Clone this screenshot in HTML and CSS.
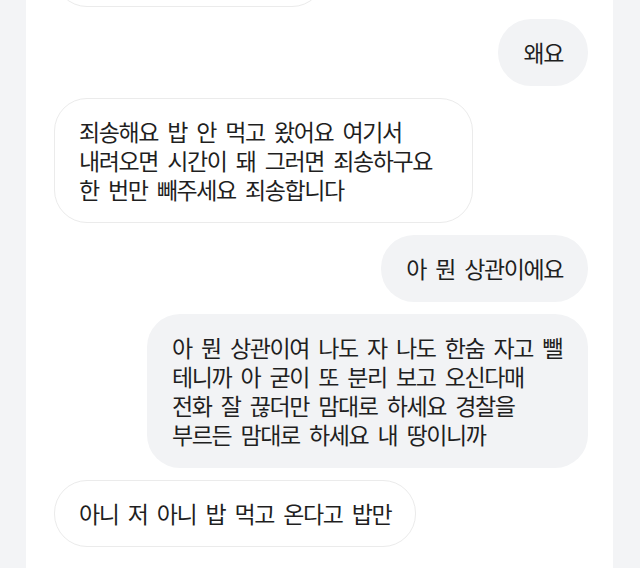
FILE: index.html
```html
<!DOCTYPE html>
<html lang="ko">
<head>
  <meta charset="UTF-8">
  <meta name="viewport" content="width=device-width, initial-scale=1.0">
  <title>대화</title>
  <link rel="stylesheet" href="styles.css">
</head>
<body>
  <div class="chat">
    <div class="msg left cut"></div>

    <div class="msg right">왜요</div>

    <div class="msg left long">죄송해요 밥 안 먹고 왔어요 여기서<br>내려오면 시간이 돼 그러면 죄송하구요<br>한 번만 빼주세요 죄송합니다</div>

    <div class="msg right">아 뭔 상관이에요</div>

    <div class="msg right long">아 뭔 상관이여 나도 자 나도 한숨 자고 뺄<br>테니까 아 굳이 또 분리 보고 오신다매<br>전화 잘 끊더만 맘대로 하세요 경찰을<br>부르든 맘대로 하세요 내 땅이니까</div>

    <div class="msg left">아니 저 아니 밥 먹고 온다고 밥만</div>
  </div>
</body>
</html>
```

FILE: styles.css
```css
html, body { margin: 0; height: 100%; }
body { background: #f3f4f6; overflow: hidden; font-family: "Noto Sans CJK KR", "Noto Sans", sans-serif; color: #1f1f1f; }
.chat { margin: 0 27px 0 26px; min-height: 100%; background: #fff; padding: 0 25px 0 28px; display: flex; flex-direction: column; gap: 12px; }
.msg { font-size: 23px; line-height: 29px; letter-spacing: -1.4px; word-spacing: 4.2px; white-space: nowrap; padding: 19px 25px; border-radius: 33px; box-sizing: border-box; }
.msg.left { align-self: flex-start; background: #fff; border: 1.5px solid #ebebeb; padding: 18px 24px; }
.msg.right { align-self: flex-end; background: #f2f3f5; }
.msg.left.long { width: 419px; }
.msg.right.long { width: 441px; }
.msg.cut { width: 271px; height: 67px; margin-top: -60px; }
```
